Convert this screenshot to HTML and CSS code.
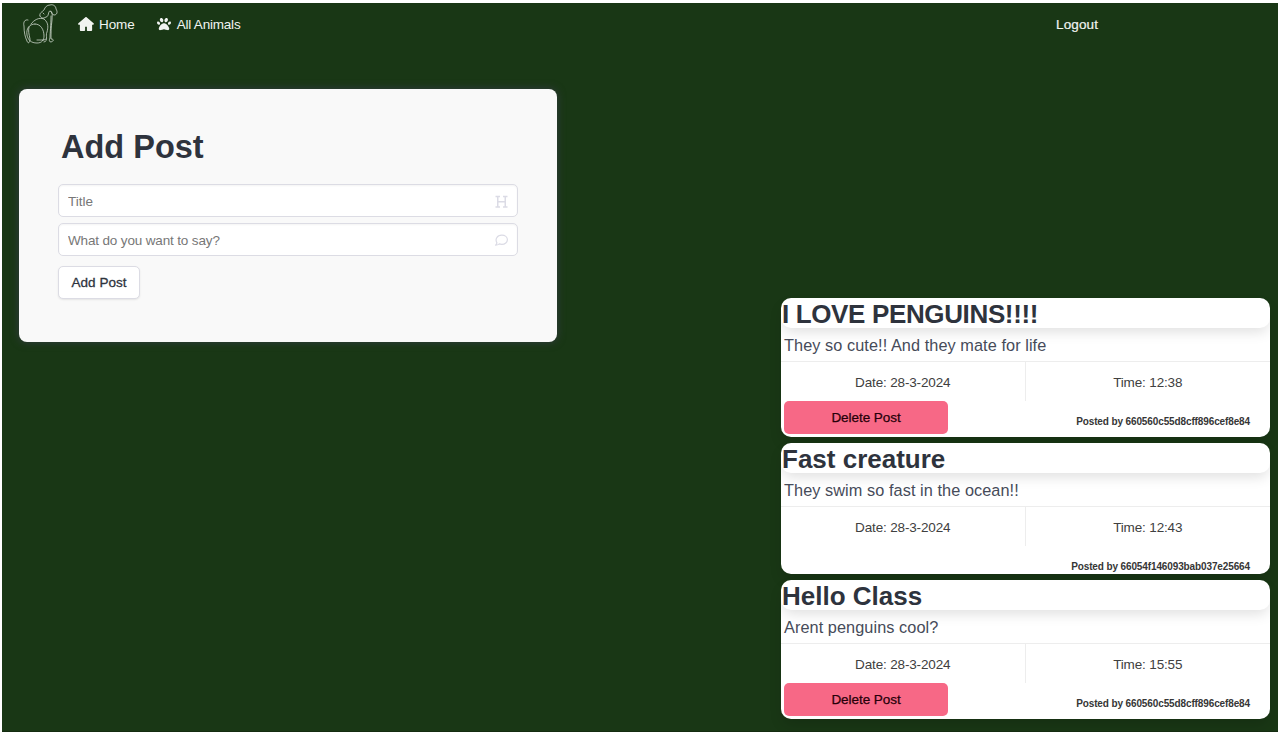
FILE: index.html
```html
<!DOCTYPE html>
<html lang="en">
<head>
<meta charset="utf-8">
<title>All Animals</title>
<link rel="stylesheet" href="styles.css">
</head>
<body>
<div class="page">
  <nav class="navbar">
    <svg class="logo" viewBox="0 0 36 42" fill="none" stroke="#e4ebe3" stroke-width=".7" stroke-linecap="round">
      <path d="M17 13C16 10 19 9 21 7C22 4 24 2 27 2C30 1 33 3 33 6C35 9 34 12 31 12C29 12 29 9 27 8C25 8 26 14 23 14C20 16 18 15 17 13"/>
      <path d="M28 8C30 10 29 13 29 17C28 24 28 31 28 36C31 36 31 38 28 39C26 39 26 37 27 35C27 30 28 22 28 13"/>
      <path d="M8 21C11 17 16 14 21 16C26 20 25 25 24 29C22 33 26 38 21 39M14 37h7l2-1"/>
      <path d="M12 21C18 21 21 27 21 33C21 37 19 40 14 40C8 40 5 37 4 32C3 26 6 21 12 21"/>
      <path d="M5 17C2 16 0 19 1 23C1 29 2 34 4 38C5 41 7 40 7 36C6 31 5 28 6 24M20 10l1 1"/>
    </svg>
    <a class="nav-item home">
      <svg class="home-icon" viewBox="0 0 576 512" fill="currentColor"><path d="M575.800 255.500c0 18-15 32.100-32 32.100h-32l.7 160.200c0 2.700-.2 5.400-.5 8.100V472c0 22.100-17.900 40-40 40H352c-22.100 0-32-17.900-32-40V352h-64v120c0 22.100-17.900 40-40 40H104c-22.100 0-40-17.900-40-40V287.600H32c-18 0-32-14-32-32.100 0-9 3-17 10-24L266.400 8c7-7 15-8 22-8s15 2 21 7l255.400 224.500c8 7 12 15 11 24z"/></svg>
      <span>Home</span>
    </a>
    <a class="nav-item animals">
      <svg class="paw-icon" viewBox="0 0 512 512" fill="currentColor"><path d="M226.500 92.900c14.300 42.900-.3 86.200-32.600 96.800s-70.100-15.600-84.400-58.500.3-86.200 32.600-96.800 70.100 15.600 84.400 58.500zM100.400 198.600c18.900 32.400 14.300 70.100-10.200 84.100s-59.700-.9-78.500-33.300S-2.700 179.300 21.800 165.300s59.700.9 78.600 33.300zM69.200 401.200C121.600 259.900 214.700 224 256 224s134.400 35.900 186.800 177.200c3.600 9.700 5.200 20.100 5.200 30.500v1.600c0 25.800-20.900 46.700-46.700 46.700-11.500 0-22.900-1.400-34-4.200l-88-22c-15.300-3.800-31.300-3.800-46.600 0l-88 22c-11.100 2.800-22.500 4.200-34 4.200C84.900 480 64 459.100 64 433.300v-1.600c0-10.400 1.600-20.800 5.200-30.500zM421.800 282.700c-24.500-14-29.100-51.700-10.200-84.100s54-47.300 78.500-33.300 29.100 51.700 10.200 84.100-54.100 47.300-78.500 33.300zM310.100 189.700c-32.300-10.600-46.900-53.900-32.600-96.800s52.100-69.100 84.400-58.500 46.900 53.900 32.600 96.800-52.100 69.100-84.400 58.500z"/></svg>
      <span>All Animals</span>
    </a>
    <a class="nav-item logout">Logout</a>
  </nav>

  <main class="content">
    <form class="post-form">
      <h1>Add Post</h1>
      <label class="field"><input class="title-input" placeholder="Title">
        <svg viewBox="0 0 13 13" fill="none" stroke="#dbdbe5" stroke-width="1.500"><path d="M.5 1.500h4.500M8 1.500h4.500M.5 12h4.500M8 12h4.500M2.750 1.500v10.500M10.250 1.500v10.500M2.750 6.750h7.500"/></svg>
      </label>
      <label class="field"><input class="text-input" placeholder="What do you want to say?">
        <svg viewBox="0 0 13 13" fill="none" stroke="#dbdbe5" stroke-width="1.200" stroke-linejoin="round"><path d="M1.900 8.900C-.2 5.300 2 1.200 6.800 1.200c3.200 0 5.600 2 5.600 4.500s-2.400 4.600-5.600 4.600c-.9 0-1.700-.1-2.500-.4-1 .8-2.200 1.300-3.700 1.300.7-.7 1.200-1.400 1.300-2.300z"/></svg>
      </label>
      <button class="add-button" type="button">Add Post</button>
    </form>

    <section class="posts">
      <article class="post with-delete">
        <h2 class="shout">I LOVE PENGUINS!!!!</h2>
        <p class="message">They so cute!! And they mate for life</p>
        <div class="meta"><span>Date: 28-3-2024</span><span>Time: 12:38</span></div>
        <footer><button class="delete-button" type="button">Delete Post</button><small>Posted by 660560c55d8cff896cef8e84</small></footer>
      </article>
      <article class="post">
        <h2>Fast creature</h2>
        <p class="message">They swim so fast in the ocean!!</p>
        <div class="meta"><span>Date: 28-3-2024</span><span>Time: 12:43</span></div>
        <footer><small>Posted by 66054f146093bab037e25664</small></footer>
      </article>
      <article class="post with-delete">
        <h2>Hello Class</h2>
        <p class="message">Arent penguins cool?</p>
        <div class="meta"><span>Date: 28-3-2024</span><span>Time: 15:55</span></div>
        <footer><button class="delete-button" type="button">Delete Post</button><small>Posted by 660560c55d8cff896cef8e84</small></footer>
      </article>
    </section>
  </main>
</div>
</body>
</html>
```

FILE: styles.css
```css
* { box-sizing: border-box; }
body { margin: 0; background: #fff; overflow: hidden; }
body, input, button { font-family: "Liberation Sans", Arial, sans-serif; font-size: 13.500px; }
.page { margin: 3px 0 0 2px; height: 729px; background: #193715; border-bottom: 1px solid #142c11; overflow: hidden; }
.navbar { display: flex; align-items: center; height: 42px; color: #f1f4f1; padding-left: 21px; }
.logo { width: 36px; height: 42px; }
.nav-item { display: flex; align-items: center; }
.home { margin-left: 19px; gap: 5px; letter-spacing: -.1px; }
.home-icon { width: 16px; height: 14px; }
.animals { margin-left: 22px; gap: 6px; letter-spacing: -.2px; }
.paw-icon { width: 14px; height: 14px; }
.logout { margin-left: auto; margin-right: 180px; letter-spacing: .1px; -webkit-text-stroke: .2px; }
.content { display: flex; justify-content: space-between; align-items: flex-start; padding: 44px 8px 0 17px; }
.post-form { width: 538px; height: 253px; padding: 39px; border-radius: 8px; background: #f9f9f9; box-shadow: 0 0 8px #343a43; }
h1, h2, p { margin: 0; }
h1 { padding: 1px 0 0 3px; font-size: 32.500px; line-height: 37px; margin-bottom: 18px; color: #2e333d; }
.field { display: flex; align-items: center; justify-content: space-between; height: 33px; padding: 1px 9px 0; margin-bottom: 6px; border: 1px solid #dcdce4; border-radius: 5px; background: #fff; box-shadow: inset 0 1px 2px #0a0a0a0c; }
.field input { flex: 1; min-width: 0; padding: 0; border: 0; outline: 0; background: transparent; color: #444; }
.field input::placeholder { color: #777; opacity: 1; }
.text-input { letter-spacing: -.15px; }
.field svg { width: 13px; height: 13px; }
.add-button { display: block; margin-top: 10px; width: 82px; height: 33px; padding: 0; border: 1px solid #dcdce4; border-radius: 5px; background: #fff; color: #2e333d; box-shadow: 0 1px 2px #0a0a0a16; letter-spacing: .05px; -webkit-text-stroke: .3px; }
.posts { width: 489px; margin-top: 209px; display: flex; flex-direction: column; gap: 6px; }
.post { height: 131px; border-radius: 10px; background: #fff; overflow: hidden; box-shadow: 0 7px 14px -2px #0a0a0a26; }
.with-delete { height: 139px; }
h2 { height: 30px; padding-left: 1px; border-radius: 10px; font-size: 26px; line-height: 33px; color: #2e333d; box-shadow: 0 6px 13px -2px #0a0a0a20; white-space: nowrap; }
.shout { letter-spacing: -.36px; }
.message { height: 34px; padding: 0 3px; border-bottom: 1px solid #ededed; font-size: 16.300px; line-height: 34px; color: #464b59; letter-spacing: .07px; }
.meta { display: grid; grid-template-columns: 1fr 1fr; height: 39px; color: #404040; letter-spacing: -.15px; }
.meta span { display: flex; align-items: center; justify-content: center; padding-top: 2px; }
.meta span:first-child { border-right: 1px solid #ededed; }
footer { display: flex; align-items: flex-start; padding: 0 20px 0 3px; }
.delete-button { width: 164px; height: 33px; padding: 0; border: 0; border-radius: 5px; background: #f76886; color: #260009; letter-spacing: -.05px; -webkit-text-stroke: .25px; }
small { margin: 14px 0 0 auto; font-size: 10px; line-height: 14px; font-weight: bold; color: #363636; letter-spacing: -.12px; }
```
